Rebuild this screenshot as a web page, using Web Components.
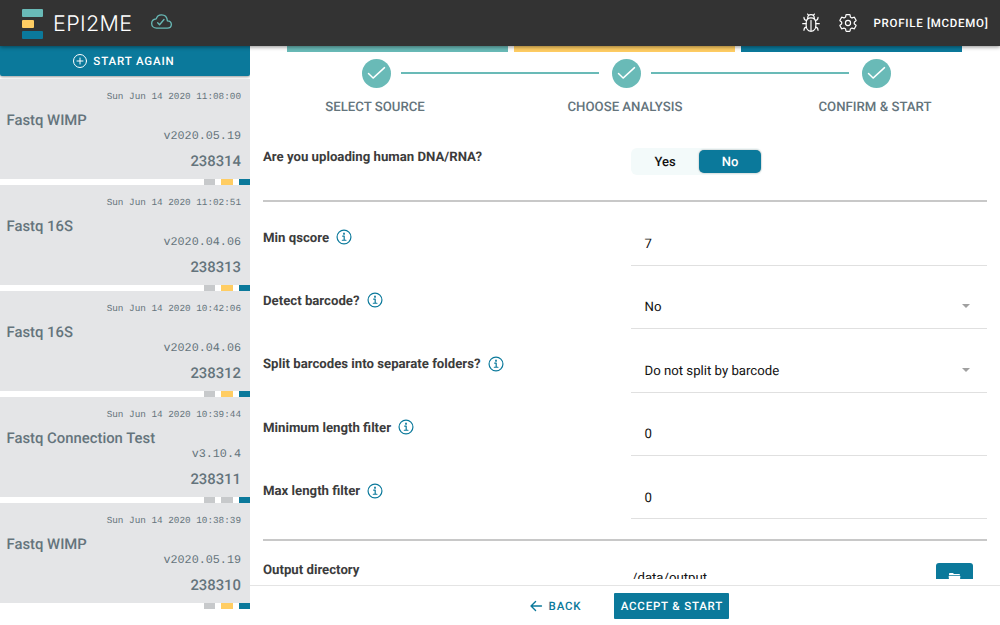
<!DOCTYPE html>
<html lang="en">
<head>
<meta charset="utf-8">
<title>EPI2ME</title>
<style>
html, body {
    margin: 0;
    height: 100%;
}
body {
    font-family: Roboto, "Liberation Sans", sans-serif;
    text-rendering: geometricPrecision;
    background: #fff;
    overflow: hidden;
    --teal: #69bab7;
    --yellow: #ffcd63;
    --blue: #0b799b;
    --slate: #64747c;
}
</style>
</head>
<body>
<epi-app></epi-app>

<script>
const RUNS = [
    { name: "Fastq WIMP", date: "Sun Jun 14 2020 11:08:00", version: "v2020.05.19", id: "238314", report: true },
    { name: "Fastq 16S", date: "Sun Jun 14 2020 11:02:51", version: "v2020.04.06", id: "238313", report: true },
    { name: "Fastq 16S", date: "Sun Jun 14 2020 10:42:06", version: "v2020.04.06", id: "238312", report: true },
    { name: "Fastq Connection Test", date: "Sun Jun 14 2020 10:39:44", version: "v3.10.4", id: "238311", report: false },
    { name: "Fastq WIMP", date: "Sun Jun 14 2020 10:38:39", version: "v2020.05.19", id: "238310", report: true }
];

const FIELDS = [
    { label: "Min qscore", value: "7" },
    { label: "Detect barcode?", value: "No", select: true },
    { label: "Split barcodes into separate folders?", value: "Do not split by barcode", select: true },
    { label: "Minimum length filter", value: "0" },
    { label: "Max length filter", value: "0" }
];

const ICONS = {
    cloud: `<path d="M400 240c-8.9-89.500-71-144-144-144-69 0-113.400 48.200-128 96-60 6-112 43.600-112 112 0 66 54 112 120 112h260c55 0 100-27.400 100-88 0-59.800-53-85.800-96-88z"/>
        <path d="M317 208 209 336l-46-51"/>`,
    bug: `<path d="M256 124c82 0 124 52 124 132v66c0 82-52 146-124 146s-124-64-124-146v-66c0-80 42-132 124-132z"/>
        <path d="M170 142c0-62 30-100 86-100s86 38 86 100M256 190v278M132 272H44M468 272h-88M142 190C92 184 76 156 76 112M370 190c50-6 66-34 66-78M142 360c-46 4-66 34-66 84M370 360c46 4 66 34 66 84M192 54l-24-28M320 54l24-28"/>`,
    settings: `<circle cx="256" cy="256" r="66"/>
        <path d="M416 256a154 154 0 0 1-1.500 21l45 35a11 11 0 0 1 2.500 14l-43 74a11 11 0 0 1-13 4.600l-45-18a16 16 0 0 0-15 1.700A164 164 0 0 1 325 401a16 16 0 0 0-9 12l-6.700 48a11 11 0 0 1-10.700 9h-85.500a11 11 0 0 1-10.700-9l-6.700-48a16 16 0 0 0-9-12 155 155 0 0 1-21.500-12.600 16 16 0 0 0-15-1.700l-45 18a11 11 0 0 1-13-4.600l-43-74a11 11 0 0 1 2.500-14l38-30a16 16 0 0 0 6-14 145 145 0 0 1 0-25 16 16 0 0 0-6-14l-38-30a11 11 0 0 1-2.500-13l43-74a11 11 0 0 1 13-4.600l45 18a16 16 0 0 0 15-1.700A164 164 0 0 1 187 111a16 16 0 0 0 9-12l6.700-48a11 11 0 0 1 10.700-9h85.500a11 11 0 0 1 10.700 9l6.700 48a16 16 0 0 0 9 12 155 155 0 0 1 21.500 12.600 16 16 0 0 0 15 1.700l45-18a11 11 0 0 1 13 4.600l43 74a11 11 0 0 1-2.500 14l-38 30a16 16 0 0 0-6 14z"/>`,
    add: `<circle cx="256" cy="256" r="208"/><path d="M256 160v192M160 256h192"/>`,
    info: `<circle cx="256" cy="256" r="222"/><path d="M212 226h50v130M202 360h116"/><path d="M256 138v28" stroke-width="50"/>`,
    back: `<path d="M240 90 74 256l166 166M80 256h376"/>`,
    check: `<path d="m92 258 94 92L420 136"/>`,
    folder: `<path d="M40 170v-60q0-36 36-36h110l56 42h194q36 0 36 36v18z" fill="currentColor" stroke="none"/>
        <path d="M24 194h464l-24 220q-4 30-36 30H84q-32 0-36-30z" fill="currentColor" stroke="none"/>`
};

class EpiElement extends HTMLElement {
    constructor() {
        super();
        this.attachShadow({ mode: "open" });
    }

    connectedCallback() {
        this.shadowRoot.innerHTML = this.getTemplate();
    }
}

class EpiIcon extends EpiElement {
    getTemplate() {
        const size = this.getAttribute("size") || 16;
        const stroke = this.getAttribute("stroke") || 32;
        return `
<style>
:host { display: inline-flex; flex: none; }
svg { display: block; fill: none; stroke: currentColor; stroke-linecap: round; stroke-linejoin: round; }
</style>
<svg width="${size}" height="${size}" viewBox="0 0 512 512" stroke-width="${stroke}">${ICONS[this.getAttribute("name")]}</svg>
`;
    }
}

class EpiHeader extends EpiElement {
    getTemplate() {
        return `
<style>
:host {
    display: flex;
    align-items: center;
    box-sizing: border-box;
    height: 46px;
    padding: 0 11.500px 0 22px;
    background: #333;
    color: #fff;
    box-shadow: 0 1px 4px rgba(0, 0, 0, .45);
    position: relative;
    z-index: 2;
}
.mark { display: grid; gap: 3px; width: 21px; margin-top: 1px; }
.mark i { display: block; height: 8px; border-radius: 1px; background: var(--teal); }
.mark i:nth-child(2) { width: 12px; background: var(--yellow); }
.mark i:nth-child(3) { background: var(--blue); }
.name { font: 300 21.500px/24px Inter, sans-serif; letter-spacing: .35px; margin: 1px 0 0 10px; width: 97.500px; white-space: nowrap; }
.cloud { color: var(--teal); margin-top: -3px; }
.bug { margin: -1px 17px 0 auto; }
.gear { margin-top: -1px; }
.profile { font-size: 11.500px; font-weight: 500; letter-spacing: .72px; margin-left: 16px; white-space: nowrap; }
</style>
<div class="mark"><i></i><i></i><i></i></div>
<span class="name">EPI2ME</span>
<epi-icon class="cloud" name="cloud" size="21"></epi-icon>
<epi-icon class="bug" name="bug" size="20" stroke="30"></epi-icon>
<epi-icon class="gear" name="settings" size="20" stroke="30"></epi-icon>
<span class="profile">PROFILE [MCDEMO]</span>
`;
    }
}

class EpiRun extends EpiElement {
    getTemplate() {
        return `
<style>
:host { display: block; height: 106px; color: var(--slate); }
.card {
    display: flex;
    flex-direction: column;
    align-items: flex-end;
    box-sizing: border-box;
    height: 100px;
    padding: 12px 9px 0 6.500px;
    background: #e4e5e7;
}
.date { font: 9.330px/12px "Liberation Mono", monospace; }
.name { align-self: flex-start; font-size: 14.850px; font-weight: 500; line-height: 18px; margin-top: 8px; }
.version { font: 11.750px/14px "Liberation Mono", monospace; }
.id { font-size: 14.850px; font-weight: 500; line-height: 18px; margin-top: 9px; }
.status { display: flex; justify-content: flex-end; gap: 6px; height: 6px; }
.status i { width: 11.300px; background: #c7c9cb; }
.status .on { background: var(--yellow); }
.status i:last-child { background: var(--blue); }
</style>
<div class="card">
<span class="date">${this.getAttribute("date")}</span>
<span class="name"><slot></slot></span>
<span class="version">${this.getAttribute("version")}</span>
<span class="id">${this.getAttribute("run-id")}</span>
</div>
<div class="status"><i></i><i class="${this.hasAttribute("report") ? "on" : ""}"></i><i></i></div>
`;
    }
}

class EpiSidebar extends EpiElement {
    getTemplate() {
        const runs = RUNS.map((run) => `<epi-run date="${run.date}" version="${run.version}" run-id="${run.id}" ${run.report ? "report" : ""}>${run.name}</epi-run>`);
        return `
<style>
:host { display: block; width: 250px; overflow: hidden; }
button {
    display: flex;
    align-items: center;
    justify-content: center;
    gap: 5px;
    width: 100%;
    height: 30px;
    margin-bottom: 3px;
    padding: 0 3px 0 0;
    border: 0;
    border-radius: 0 0 2px 2px;
    background: var(--blue);
    color: #fff;
    font: 500 11.500px Roboto, sans-serif;
    letter-spacing: .85px;
    text-rendering: inherit;
    box-shadow: 0 1px 3px rgba(0, 0, 0, .4);
}
</style>
<button type="button"><epi-icon name="add" size="16"></epi-icon>START AGAIN</button>
${runs.join("")}
`;
    }
}

class EpiSteps extends EpiElement {
    getTemplate() {
        return `
<style>
:host { display: block; }
.bars { display: grid; grid-template-columns: repeat(3, 221px); gap: 6px; padding-left: 37.400px; }
.bars i { height: 6.400px; background: var(--teal); }
.bars i:nth-child(2) { background: var(--yellow); }
.bars i:nth-child(3) { background: var(--blue); }
.track { display: flex; align-items: center; padding: 7px 109px 0 112px; }
.dot {
    display: grid;
    place-items: center;
    width: 29px;
    height: 29px;
    border-radius: 50%;
    background: var(--teal);
    color: #fff;
}
.line { flex: 1; height: 2px; background: var(--teal); margin: 0 13px 1px 10px; }
.labels {
    display: grid;
    grid-template-columns: repeat(3, 250px);
    margin-top: 10.500px;
    text-align: center;
    font-size: 13.200px;
    font-weight: 500;
    line-height: 18px;
    color: var(--slate);
}
</style>
<div class="bars"><i></i><i></i><i></i></div>
<div class="track">
<span class="dot"><epi-icon name="check" size="25" stroke="30"></epi-icon></span><i class="line"></i>
<span class="dot"><epi-icon name="check" size="25" stroke="30"></epi-icon></span><i class="line"></i>
<span class="dot"><epi-icon name="check" size="25" stroke="30"></epi-icon></span>
</div>
<div class="labels"><span>SELECT SOURCE</span><span>CHOOSE ANALYSIS</span><span>CONFIRM &amp; START</span></div>
`;
    }
}

class EpiField extends EpiElement {
    getTemplate() {
        return `
<style>
:host { display: grid; grid-template-columns: 368px 1fr; height: 63.400px; }
.label {
    display: flex;
    gap: 7px;
    height: 18px;
    align-items: center;
    padding-top: var(--label-top, 26.600px);
    font-size: 13.200px;
    font-weight: 700;
    color: #3c3c3c;
}
epi-icon { color: var(--blue); margin-top: -2px; }
</style>
<div class="label"><span>${this.getAttribute("label")}</span>${this.hasAttribute("info") ? '<epi-icon name="info" size="16" stroke="38"></epi-icon>' : ""}</div>
<slot></slot>
`;
    }
}

class EpiInput extends EpiElement {
    getTemplate() {
        return `
<style>
:host {
    display: flex;
    justify-content: space-between;
    align-items: flex-start;
    box-sizing: border-box;
    border-bottom: 1px solid #e0e0e0;
    padding: 33.600px 16.500px 0 13.500px;
    font-size: 13.200px;
    line-height: 18px;
    color: #111;
}
.caret {
    border: 4px solid transparent;
    border-top-color: #a0a0a0;
    border-bottom: 0;
    margin-top: 5px;
}
</style>
<slot></slot>${this.hasAttribute("select") ? '<i class="caret"></i>' : ""}
`;
    }
}

class EpiToggle extends EpiElement {
    getTemplate() {
        return `
<style>
:host {
    display: grid;
    grid-template-columns: 66px 62px;
    align-items: center;
    box-sizing: border-box;
    width: 131px;
    height: 27px;
    padding: 0 1px 0 2px;
    border-radius: 6px;
    background: #f3fafa;
    font-size: 13px;
    font-weight: 500;
    line-height: 23px;
    text-align: center;
    color: #111;
}
span { height: 23px; line-height: 25px; }
.yes { padding-right: 2px; }
.on { border-radius: 5px; background: var(--blue); color: #fff; box-shadow: 0 0 2px rgba(0, 0, 0, .35); }
</style>
<span class="yes">Yes</span><span class="on">No</span>
`;
    }
}

class EpiForm extends EpiElement {
    getTemplate() {
        const fields = FIELDS.map((field) => `<epi-field label="${field.label}" info><epi-input ${field.select ? "select" : ""}>${field.value}</epi-input></epi-field>`);
        return `
<style>
:host { display: block; padding: 0 13.500px 0 13px; }
section { border-bottom: 2px solid #c8c8c8; }
.human { padding-top: 31px; }
.human epi-field { height: 52.600px; --label-top: 1px; }
.params { padding-bottom: 20px; }
.output { --label-top: 20px; }
.path { display: flex; justify-content: space-between; padding: 21.500px 13.500px 0 1px; font-size: 13.200px; color: #111; }
.path span { height: 30px; line-height: 31px; }
.path button {
    display: grid;
    place-items: center;
    width: 37px;
    height: 28px;
    border: 0;
    border-radius: 3px;
    padding: 2px 0 0;
    background: var(--blue);
    color: #fff;
}
</style>
<section class="human"><epi-field label="Are you uploading human DNA/RNA?"><epi-toggle></epi-toggle></epi-field></section>
<section class="params">${fields.join("")}</section>
<epi-field class="output" label="Output directory">
<div class="path"><span>/data/output</span><button type="button"><epi-icon name="folder" size="13"></epi-icon></button></div>
</epi-field>
`;
    }
}

class EpiFooter extends EpiElement {
    getTemplate() {
        return `
<style>
:host {
    display: flex;
    align-items: center;
    justify-content: center;
    gap: 33px;
    height: 39px;
    padding-left: 8px;
    border-top: 1px solid #e4e4e4;
}
button {
    display: flex;
    align-items: center;
    gap: 6px;
    height: 26px;
    padding: 0;
    border: 0;
    background: none;
    color: var(--blue);
    font: 500 11.500px Roboto, sans-serif;
    letter-spacing: .8px;
    text-rendering: inherit;
    white-space: nowrap;
}
.primary { width: 115px; justify-content: center; border-radius: 1px; background: var(--blue); color: #fff; }
</style>
<button type="button"><epi-icon name="back" size="14" stroke="50"></epi-icon>BACK</button>
<button type="button" class="primary">ACCEPT &amp; START</button>
`;
    }
}

class EpiApp extends EpiElement {
    getTemplate() {
        return `
<style>
:host { display: grid; grid-template-rows: 46px 1fr; height: 100vh; }
.body { display: grid; grid-template-columns: 250px 1fr; min-height: 0; }
main { display: flex; flex-direction: column; min-width: 0; min-height: 0; }
.scroll { flex: 1; min-height: 0; overflow: hidden; margin-bottom: 6px; }
</style>
<epi-header></epi-header>
<div class="body">
<epi-sidebar></epi-sidebar>
<main>
<div class="scroll"><epi-steps></epi-steps><epi-form></epi-form></div>
<epi-footer></epi-footer>
</main>
</div>
`;
    }
}

customElements.define("epi-icon", EpiIcon);
customElements.define("epi-header", EpiHeader);
customElements.define("epi-run", EpiRun);
customElements.define("epi-sidebar", EpiSidebar);
customElements.define("epi-steps", EpiSteps);
customElements.define("epi-field", EpiField);
customElements.define("epi-input", EpiInput);
customElements.define("epi-toggle", EpiToggle);
customElements.define("epi-form", EpiForm);
customElements.define("epi-footer", EpiFooter);
customElements.define("epi-app", EpiApp);
</script>
</body>
</html>
